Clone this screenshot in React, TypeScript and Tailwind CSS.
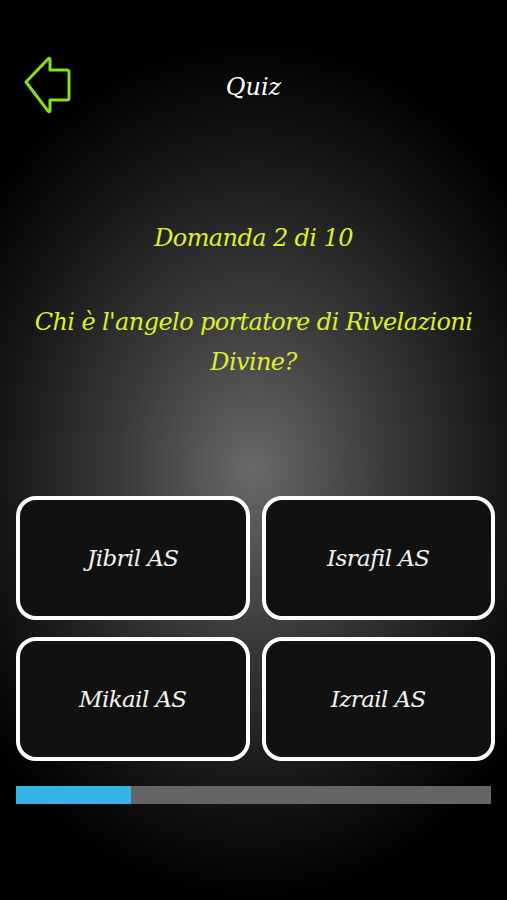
import { useState } from "react";

const answers = ["Jibril AS", "Israfil AS", "Mikail AS", "Izrail AS"];

const BackArrow = () => (
  <svg width="56" height="62" viewBox="0 0 56 62" fill="none">
    <path
      d="M5 27 L27 4 Q29 2 29 5 L29 15 L46 15 Q48 15 48 17 L48 43 Q48 45 46 45 L29 45 L29 55 Q29 58 27 56 Z"
      stroke="#84e01e"
      strokeWidth="3"
      strokeLinejoin="round"
    />
  </svg>
);

const App = () => {
  const [selected, setSelected] = useState<number | null>(null);
  const current = 2;
  const total = 10;

  return (
    <div
      className="w-[507px] h-[900px] flex flex-col bg-[radial-gradient(ellipse_340px_430px_at_253px_470px,#6a6868_0%,#3a3939_40%,#151515_75%,#000_100%)] text-white"
      style={{ fontFamily: '"DejaVu Serif", "Liberation Serif", serif' }}
    >
      <div className="relative h-[218px] flex justify-center pt-[70px]">
        <button className="absolute left-[21px] top-[55px]">
          <BackArrow />
        </button>
        <h1 className="italic text-[24px] leading-[34px] h-[34px]">Quiz</h1>
      </div>

      <div className="flex flex-col items-center text-[#dcee2e] italic text-[24px] tracking-[-0.6px]">
        <p className="leading-[40px]">
          Domanda {current} di {total}
        </p>
        <p className="mt-[44px] px-[8px] text-center leading-[40px]">
          Chi è l'angelo portatore di Rivelazioni Divine?
        </p>
      </div>

      <div className="mt-[114px] pl-[16px] pr-[12px] grid grid-cols-2 gap-x-[12px] gap-y-[17px]">
        {answers.map((a, i) => (
          <button
            key={a}
            onClick={() => setSelected(i)}
            className={`h-[124px] rounded-[20px] border-[4px] border-white bg-[#111111] italic text-[23px] tracking-[-0.6px] ${
              selected === i ? "text-[#dcee2e]" : "text-[#f2f2f2]"
            }`}
          >
            {a}
          </button>
        ))}
      </div>

      <div className="mt-[25px] mx-[16px] w-[475px] h-[18px] bg-[#646464] flex">
        <div className="h-full bg-[#35b5e6]" style={{ width: `${((current) / total) * 100 + 4.3}%` }} />
      </div>
    </div>
  );
};

export default App;
